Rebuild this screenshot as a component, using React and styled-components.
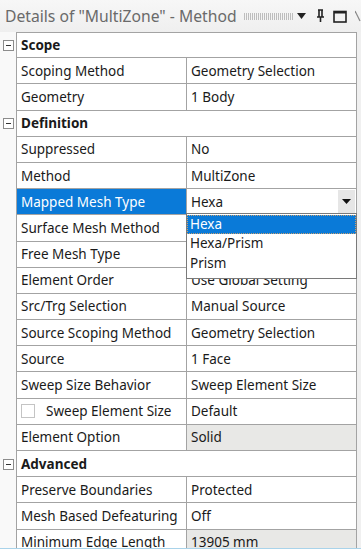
import styled, { createGlobalStyle } from "styled-components";

const GlobalStyle = createGlobalStyle`
  html, body {
    margin: 0;
    padding: 0;
    background: #ffffff;
  }
  body {
    font-family: "Noto Sans", "Open Sans", sans-serif;
  }
`;

const Panel = styled.div`
  width: 361px;
  height: 548px;
  overflow: hidden;
  background: #f0f0f0;
  border-bottom: 1px solid #a9d3ea;
`;

const TitleBar = styled.div`
  height: 32px;
  display: flex;
  align-items: center;
  padding-left: 5px;
  background: linear-gradient(#f7f7f7, #efefef);
  color: #6a6a6a;
  font-size: 15.7px;
  white-space: nowrap;
`;

const Grip = styled.div`
  width: 54px;
  height: 7px;
  margin-left: 7px;
  background-image: repeating-linear-gradient(
      90deg,
      #bdbdbd 0 1px,
      transparent 1px 2px
    ),
    repeating-linear-gradient(0deg, #f4f4f4 0 1px, transparent 1px 2px);
  background-blend-mode: normal;
`;

const TitleIcon = styled.svg`
  flex: none;
  margin-left: ${(p) => p.gap}px;
`;

const Table = styled.div`
  width: 357px;
  background: #ffffff;
`;

const Row = styled.div`
  display: grid;
  grid-template-columns: 16px 170px 171px;
  height: 26.2px;
`;

const Gutter = styled.div`
  display: flex;
  align-items: center;
  justify-content: center;
  background: #f9f9f9;
`;

const Toggle = styled.div`
  width: 9px;
  height: 9px;
  border: 1px solid #8c8c8c;
  background: #ffffff;
  position: relative;
  &::after {
    content: "";
    position: absolute;
    left: 2px;
    right: 2px;
    top: 4px;
    height: 1px;
    background: #333;
  }
`;

const Cell = styled.div`
  box-sizing: border-box;
  display: flex;
  align-items: center;
  padding-left: 4px;
  border-left: 1px solid #a3a3a3;
  border-bottom: 1px solid #a3a3a3;
  border-top: ${(p) => (p.first ? "1px solid #a3a3a3" : "none")};
  border-right: ${(p) => (p.last ? "1px solid #a3a3a3" : "none")};
  background: ${(p) => (p.selected ? "#0a7ad8" : p.readOnly ? "#e8e8e6" : "#ffffff")};
  color: ${(p) => (p.selected ? "#ffffff" : "#1a1a1a")};
  font-size: 13.5px;
  white-space: nowrap;
  overflow: ${(p) => (p.open ? "visible" : "hidden")};
  position: relative;
`;

const Category = styled(Cell)`
  grid-column: span 2;
  font-weight: bold;
`;

const Check = styled.span`
  width: 12px;
  height: 12px;
  border: 1px solid #c4c4c4;
  background: #ffffff;
  margin-right: 11px;
`;

const ComboValue = styled.span`
  flex: 1;
`;

const ComboButton = styled.div`
  align-self: stretch;
  width: 17px;
  margin: 1px 1px 1px 0;
  display: flex;
  align-items: center;
  justify-content: center;
  background: #e6e6e6;
`;

const DropList = styled.ul`
  position: absolute;
  top: 24px;
  left: -1px;
  width: 169px;
  margin: 0;
  padding: 1px 0 5px;
  list-style: none;
  background: #ffffff;
  border: 1px solid #7a7a7a;
  z-index: 2;
`;

const DropItem = styled.li`
  height: 19.3px;
  line-height: 19px;
  padding-left: 3px;
  font-size: 13.5px;
  color: ${(p) => (p.active ? "#ffffff" : "#1a1a1a")};
  background: ${(p) => (p.active ? "#0a7ad8" : "transparent")};
  outline: ${(p) => (p.active ? "1px dotted #c8a070" : "none")};
  outline-offset: -1px;
`;

const rows = [
  { cat: "Scope" },
  { name: "Scoping Method", value: "Geometry Selection" },
  { name: "Geometry", value: "1 Body" },
  { cat: "Definition" },
  { name: "Suppressed", value: "No" },
  { name: "Method", value: "MultiZone" },
  { name: "Mapped Mesh Type", value: "Hexa", combo: true },
  { name: "Surface Mesh Method", value: "" },
  { name: "Free Mesh Type", value: "" },
  { name: "Element Order", value: "Use Global Setting" },
  { name: "Src/Trg Selection", value: "Manual Source" },
  { name: "Source Scoping Method", value: "Geometry Selection" },
  { name: "Source", value: "1 Face" },
  { name: "Sweep Size Behavior", value: "Sweep Element Size" },
  { name: "Sweep Element Size", value: "Default", check: true },
  { name: "Element Option", value: "Solid", readOnly: true },
  { cat: "Advanced" },
  { name: "Preserve Boundaries", value: "Protected" },
  { name: "Mesh Based Defeaturing", value: "Off" },
  { name: "Minimum Edge Length", value: "13905 mm", readOnly: true },
];

const App = () => {
  return (
    <Panel>
      <GlobalStyle />
      <TitleBar>
        Details of "MultiZone" - Method
        <Grip />
        <TitleIcon gap={4} width="9" height="6" viewBox="0 0 9 6">
          <path d="M0 0 H9 L4.5 6 Z" fill="#222" />
        </TitleIcon>
        <TitleIcon gap={10} width="9" height="14" viewBox="0 0 9 14">
          <path d="M2 1 H7 M3 1 V8 M6 1 V8 M1 8 H8 M4.5 8 V13" stroke="#222" strokeWidth="1.6" fill="none" />
        </TitleIcon>
        <TitleIcon gap={8} width="14" height="13" viewBox="0 0 14 13">
          <rect x="1" y="1.5" width="12" height="10.5" stroke="#222" strokeWidth="1.6" fill="none" />
          <path d="M1 2.5 H13" stroke="#222" strokeWidth="2" />
        </TitleIcon>
        <TitleIcon gap={8} width="6" height="12" viewBox="0 0 6 12">
          <path d="M0 1 L5 11" stroke="#888" strokeWidth="1.2" />
        </TitleIcon>
      </TitleBar>
      <Table>
        {rows.map((r, i) =>
          r.cat ? (
            <Row key={i}>
              <Gutter>
                <Toggle />
              </Gutter>
              <Category first={i === 0} last>
                {r.cat}
              </Category>
            </Row>
          ) : (
            <Row key={i}>
              <Gutter />
              <Cell selected={r.combo}>
                {r.check && <Check />}
                {r.name}
              </Cell>
              <Cell last readOnly={r.readOnly} open={r.combo}>
                {r.combo ? (
                  <>
                    <ComboValue>{r.value}</ComboValue>
                    <ComboButton>
                      <svg width="9" height="5" viewBox="0 0 9 5">
                        <path d="M0 0 H9 L4.5 5 Z" fill="#111" />
                      </svg>
                    </ComboButton>
                    <DropList>
                      <DropItem active>Hexa</DropItem>
                      <DropItem>Hexa/Prism</DropItem>
                      <DropItem>Prism</DropItem>
                    </DropList>
                  </>
                ) : (
                  r.value
                )}
              </Cell>
            </Row>
          )
        )}
      </Table>
    </Panel>
  );
};

export default App;
